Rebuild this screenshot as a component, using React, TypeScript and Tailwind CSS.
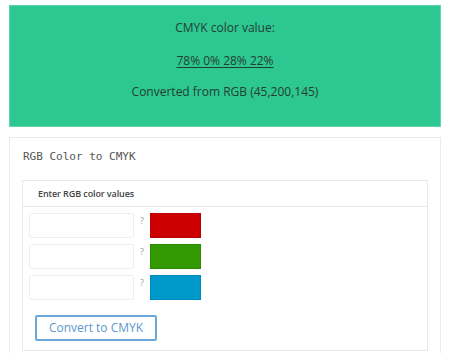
const rows = [
  { color: "bg-[#cc0000]" },
  { color: "bg-[#339900]" },
  { color: "bg-[#0099cc]" },
]

function App() {
  return (
    <div className="w-[450px] h-[353px] overflow-hidden bg-white font-['Open_Sans',sans-serif] text-[#333]">
      <div className="mx-[9px] mt-[5px] h-[122px] bg-[#2dc891] border border-[#5cd6aa] text-[#253d33] text-[12px] leading-[18px] text-center pt-[13px]">
        <p>CMYK color value:</p>
        <p className="mt-[15px]">
          <a className="underline underline-offset-2">78% 0% 28% 22%</a>
        </p>
        <p className="mt-[13px]">Converted from RGB (45,200,145)</p>
      </div>

      <div className="mx-[9px] mt-[10px] border border-[#eeeaea] pt-[12px] px-[12px] h-[240px]">
        <h2 className="font-['DejaVu_Sans_Mono',monospace] text-[11px] leading-[14px] text-[#555] pl-[1px]">RGB Color to CMYK</h2>

        <div className="mt-[16px] border border-[#ece8e8]">
          <div className="h-[26px] flex items-center px-[15px] border-b border-[#ece8e8] text-[9px] font-semibold text-[#444] tracking-[-0.1px]">
            Enter RGB color values
          </div>
          <div className="px-[6px] pt-[6px] pb-[9px]">
            <div className="flex flex-col gap-[6px]">
              {rows.map((r, i) => (
                <div key={i} className="flex items-start">
                  <input className="w-[105px] h-[25px] rounded-[3px] border border-dotted border-[#e4dcdc] outline-none" />
                  <span className="ml-[6px] w-[10px] text-[9px] leading-[16px] text-[#999]">?</span>
                  <div className={`${r.color} w-[51px] h-[25px] border border-black/10`} />
                </div>
              ))}
            </div>
            <button className="mt-[15px] ml-[6px] w-[122px] h-[26px] border-2 border-[#6aa7d8] rounded-[2px] text-[12px] text-[#5a98cc]">
              Convert to CMYK
            </button>
          </div>
        </div>
      </div>
    </div>
  )
}

export default App
